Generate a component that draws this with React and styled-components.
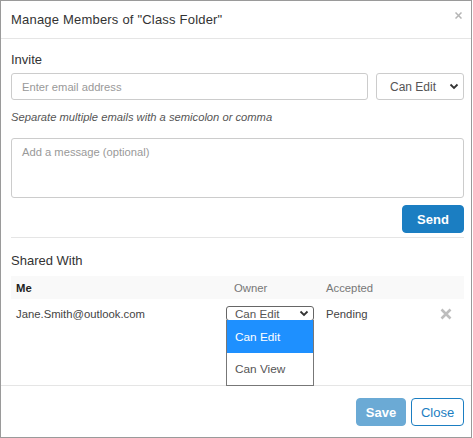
import React from "react";
import styled, { createGlobalStyle } from "styled-components";

const Global = createGlobalStyle`
  html, body {
    margin: 0;
    padding: 0;
    background: #fff;
  }
  body {
    font-family: "Liberation Sans", Arial, sans-serif;
    color: #333;
  }
  * { box-sizing: border-box; }
`;

const Dialog = styled.div`
  width: 472px;
  height: 438px;
  border: 1px solid #9a9a9a;
  background: #fff;
  display: flex;
  flex-direction: column;
`;

const Header = styled.div`
  height: 38px;
  flex: none;
  display: flex;
  align-items: center;
  justify-content: space-between;
  padding: 0 8px 0 10px;
  border-bottom: 1px solid #e5e5e5;
`;

const Title = styled.div`
  font-family: "Liberation Sans", Arial, sans-serif;
  font-size: 13px;
  letter-spacing: 0.2px;
  color: #333;
`;

const HeaderClose = styled.button`
  border: 0;
  background: none;
  padding: 0;
  margin-top: -9px;
  width: 10px;
  height: 10px;
  display: flex;
  align-items: center;
  justify-content: center;
  cursor: pointer;
`;

const Body = styled.div`
  flex: 1;
  padding: 13px 7px 0 10px;
  display: flex;
  flex-direction: column;
`;

const SectionLabel = styled.div`
  font-size: 13px;
  line-height: 16px;
  color: #333;
  margin-bottom: ${(p) => p.$gap || 5}px;
`;

const InviteRow = styled.div`
  display: flex;
  gap: 8px;
`;

const TextInput = styled.input`
  flex: 1;
  height: 27px;
  border: 1px solid #ccc;
  border-radius: 3px;
  padding: 0 10px;
  font-family: inherit;
  font-size: 11.2px;
  color: #333;
  outline: none;
  &::placeholder { color: #999; }
`;

const SelectBox = styled.div`
  width: 88px;
  height: 27px;
  border: 1px solid #ccc;
  border-radius: 3px;
  display: flex;
  align-items: center;
  justify-content: space-between;
  padding: 0 4px 0 13px;
  font-size: 12px;
  color: #555;
`;

const Hint = styled.div`
  margin-top: 10px;
  font-size: 11.2px;
  line-height: 14px;
  font-style: italic;
  color: #555;
`;

const MessageArea = styled.textarea`
  margin-top: 14px;
  height: 60px;
  width: 100%;
  resize: none;
  border: 1px solid #ccc;
  border-radius: 3px;
  padding: 7px 10px;
  font-family: inherit;
  font-size: 11.2px;
  outline: none;
  &::placeholder { color: #999; }
`;

const ButtonRow = styled.div`
  display: flex;
  justify-content: flex-end;
  gap: 5px;
  margin-top: ${(p) => p.$top || 0}px;
`;

const Button = styled.button`
  height: 28px;
  width: ${(p) => p.$w || 50}px;
  padding: 0;
  border-radius: 4px;
  font-family: inherit;
  font-size: 13px;
  font-weight: ${(p) => (p.$variant === "outline" ? "normal" : "bold")};
  cursor: pointer;
  border: 1px solid
    ${(p) =>
      p.$variant === "muted" ? "#6baad5" : "#1b7ec2"};
  background: ${(p) =>
    p.$variant === "outline"
      ? "#fff"
      : p.$variant === "muted"
      ? "#6baad5"
      : "#1b7ec2"};
  color: ${(p) => (p.$variant === "outline" ? "#1b7ec2" : "#fff")};
`;

const Divider = styled.hr`
  border: 0;
  border-top: 1px solid #e5e5e5;
  margin: 4px 0 15px 0;
`;

const TableHead = styled.div`
  display: grid;
  grid-template-columns: 210px 100px 1fr 37px;
  height: 23px;
  align-items: center;
  background: #f9f9f9;
  padding-left: 5px;
  font-size: 11.3px;
`;

const HeadCell = styled.div`
  padding-left: ${(p) => p.$indent || 0}px;
  color: ${(p) => (p.$strong ? "#222" : "#777")};
  font-weight: ${(p) => (p.$strong ? "bold" : "normal")};
`;

const TableRow = styled.div`
  display: grid;
  grid-template-columns: 210px 100px 1fr 37px;
  align-items: center;
  padding-left: 5px;
  padding-top: 7px;
  font-size: 11.3px;
  color: #444;
`;

const Cell = styled.div`
  position: relative;
`;

const SmallSelect = styled.div`
  width: 88px;
  height: 15px;
  border: 1px solid #666;
  border-radius: 3px;
  display: flex;
  align-items: center;
  justify-content: space-between;
  padding: 0 4px 0 8px;
  font-size: 11.6px;
  color: #555;
`;

const Menu = styled.div`
  position: absolute;
  top: 14px;
  left: 0;
  width: 88px;
  border: 1px solid #777;
  border-top: 0;
  background: #fff;
  z-index: 2;
`;

const MenuItem = styled.div`
  height: ${(p) => (p.$active ? 33 : 32)}px;
  display: flex;
  align-items: center;
  padding-left: 8px;
  font-size: 11.8px;
  background: ${(p) => (p.$active ? "#1e90ff" : "#fff")};
  color: ${(p) => (p.$active ? "#fff" : "#555")};
`;

const RemoveCell = styled.div`
  display: flex;
  justify-content: center;
`;

const Footer = styled.div`
  flex: none;
  height: 52px;
  border-top: 1px solid #e5e5e5;
  padding: 12px 7px 0 10px;
`;

const Chevron = () => (
  <svg width="10" height="7" viewBox="0 0 10 7">
    <polyline
      points="1.5,1.5 5,5 8.5,1.5"
      fill="none"
      stroke="#333"
      strokeWidth="1.8"
    />
  </svg>
);

export default function App() {
  return (
    <>
      <Global />
      <Dialog>
        <Header>
          <Title>Manage Members of "Class Folder"</Title>
          <HeaderClose aria-label="close">
            <svg width="7" height="7" viewBox="0 0 7 7">
              <path d="M0.5 0.5 L6.5 6.5 M6.5 0.5 L0.5 6.5" stroke="#b5b5b5" strokeWidth="1.5" />
            </svg>
          </HeaderClose>
        </Header>
        <Body>
          <SectionLabel>Invite</SectionLabel>
          <InviteRow>
            <TextInput placeholder="Enter email address" />
            <SelectBox>
              Can Edit
              <Chevron />
            </SelectBox>
          </InviteRow>
          <Hint>Separate multiple emails with a semicolon or comma</Hint>
          <MessageArea placeholder="Add a message (optional)" />
          <ButtonRow $top={7}>
            <Button $w={62}>Send</Button>
          </ButtonRow>
          <Divider />
          <SectionLabel $gap={7}>Shared With</SectionLabel>
          <TableHead>
            <HeadCell $strong>Me</HeadCell>
            <HeadCell $indent={8}>Owner</HeadCell>
            <HeadCell>Accepted</HeadCell>
            <HeadCell />
          </TableHead>
          <TableRow>
            <Cell>Jane.Smith@outlook.com</Cell>
            <Cell>
              <SmallSelect>
                Can Edit
                <Chevron />
              </SmallSelect>
              <Menu>
                <MenuItem $active>Can Edit</MenuItem>
                <MenuItem>Can View</MenuItem>
              </Menu>
            </Cell>
            <Cell>Pending</Cell>
            <RemoveCell>
              <svg width="12" height="12" viewBox="0 0 12 12">
                <path d="M1.5 1.5 L10.5 10.5 M10.5 1.5 L1.5 10.5" stroke="#bdbdbd" strokeWidth="2.6" />
              </svg>
            </RemoveCell>
          </TableRow>
        </Body>
        <Footer>
          <ButtonRow>
            <Button $variant="muted" $w={50}>Save</Button>
            <Button $variant="outline" $w={53}>Close</Button>
          </ButtonRow>
        </Footer>
      </Dialog>
    </>
  );
}
